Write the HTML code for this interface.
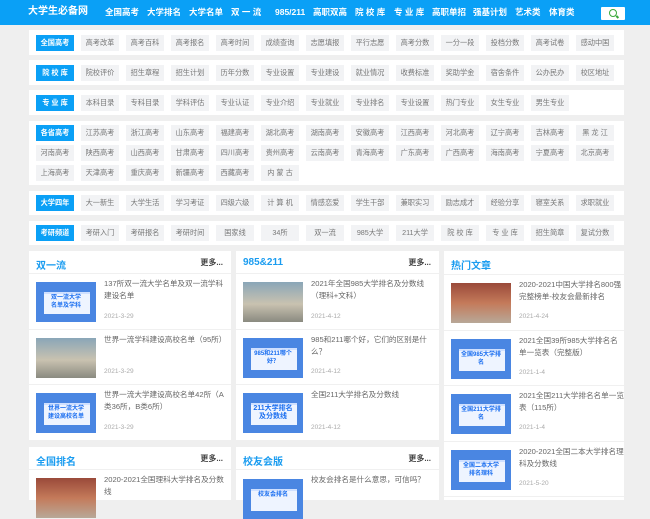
<!DOCTYPE html>
<html><head><meta charset="utf-8"><style>
*{margin:0;padding:0;box-sizing:border-box}
body{width:650px;height:500px;overflow:hidden;background:#efefef;font-family:"Liberation Sans","Noto Sans CJK SC",sans-serif;position:relative}
.hd{position:absolute;left:0;top:0;width:650px;height:25px;background:#0aa0f6}
.hd span{position:absolute;top:6px;color:#fff;font-weight:bold;font-size:8.5px;line-height:12px;white-space:nowrap}
.logo{font-size:10px!important}
.srch{position:absolute;left:601px;top:7px;width:24px;height:13px;background:#fff;border-radius:1px}
.srch:after{content:"";position:absolute;left:8px;top:2px;width:6px;height:6px;border:1.5px solid #3aa83a;border-radius:50%}
.srch:before{content:"";position:absolute;left:15px;top:9px;width:3px;height:1.5px;background:#3aa83a;transform:rotate(45deg)}
.row{position:absolute;left:29px;width:595px;background:#fff}
.it{position:absolute;width:38px;height:16px;background:#f2f3f5;color:#777;font-size:7.2px;line-height:16px;text-align:center;white-space:nowrap}
.lb{background:#0aa0f6;color:#fff;font-weight:bold}
.pn{position:absolute;background:#fff}
.pt{position:absolute;left:7px;top:6px;color:#1a9cf0;font-weight:bold;font-size:10px}
.more{position:absolute;right:8px;top:6px;color:#444;font-size:8px;font-weight:bold}
.ln{position:absolute;left:0;right:0;height:1px;background:#f0f0f0}
.im{position:absolute;width:60px;height:40px;background:#4a86e2;overflow:hidden}
.im i{position:absolute;left:8px;top:10px;width:46px;height:22px;background:#eef4ff;border-top:2px solid #cfe0ff}
.im b{position:absolute;left:10px;top:12px;width:40px;color:#1a6ef0;font-size:6px;line-height:8px;text-align:center;font-weight:bold}
.ph{background:linear-gradient(#8aa6b8,#c9c2b0 55%,#8a8a80)}
.ph2{background:linear-gradient(#9a4a3a,#c47a5a 50%,#b8a898)}
.tt{position:absolute;color:#666;font-size:7.6px;line-height:12px}
.dt{position:absolute;color:#aaa;font-size:6.5px}
</style></head><body>
<div class="hd">
<span class="logo" style="left:28px;top:6px">大学生必备网</span>
<span style="left:105px">全国高考</span><span style="left:147px">大学排名</span><span style="left:189px">大学名单</span><span style="left:231px">双 一 流</span><span style="left:275px">985/211</span><span style="left:313px">高职双高</span><span style="left:355px">院 校 库</span><span style="left:394px">专 业 库</span><span style="left:432px">高职单招</span><span style="left:473px">强基计划</span><span style="left:515px">艺术类</span><span style="left:549px">体育类</span>
<div class="srch"></div>
</div>

<div class="row" style="top:30px;height:25px">
<div class="it lb" style="left:7px;top:5px">全国高考</div><div class="it" style="left:52px;top:5px">高考改革</div><div class="it" style="left:97px;top:5px">高考百科</div><div class="it" style="left:142px;top:5px">高考报名</div><div class="it" style="left:187px;top:5px">高考时间</div><div class="it" style="left:232px;top:5px">成绩查询</div><div class="it" style="left:277px;top:5px">志愿填报</div><div class="it" style="left:322px;top:5px">平行志愿</div><div class="it" style="left:367px;top:5px">高考分数</div><div class="it" style="left:412px;top:5px">一分一段</div><div class="it" style="left:457px;top:5px">投档分数</div><div class="it" style="left:502px;top:5px">高考试卷</div><div class="it" style="left:547px;top:5px">感动中国</div>
</div>
<div class="row" style="top:60px;height:25px">
<div class="it lb" style="left:7px;top:5px">院 校 库</div><div class="it" style="left:52px;top:5px">院校评价</div><div class="it" style="left:97px;top:5px">招生章程</div><div class="it" style="left:142px;top:5px">招生计划</div><div class="it" style="left:187px;top:5px">历年分数</div><div class="it" style="left:232px;top:5px">专业设置</div><div class="it" style="left:277px;top:5px">专业建设</div><div class="it" style="left:322px;top:5px">就业情况</div><div class="it" style="left:367px;top:5px">收费标准</div><div class="it" style="left:412px;top:5px">奖助学金</div><div class="it" style="left:457px;top:5px">宿舍条件</div><div class="it" style="left:502px;top:5px">公办民办</div><div class="it" style="left:547px;top:5px">校区地址</div>
</div>
<div class="row" style="top:90px;height:25px">
<div class="it lb" style="left:7px;top:5px">专 业 库</div><div class="it" style="left:52px;top:5px">本科目录</div><div class="it" style="left:97px;top:5px">专科目录</div><div class="it" style="left:142px;top:5px">学科评估</div><div class="it" style="left:187px;top:5px">专业认证</div><div class="it" style="left:232px;top:5px">专业介绍</div><div class="it" style="left:277px;top:5px">专业就业</div><div class="it" style="left:322px;top:5px">专业排名</div><div class="it" style="left:367px;top:5px">专业设置</div><div class="it" style="left:412px;top:5px">热门专业</div><div class="it" style="left:457px;top:5px">女生专业</div><div class="it" style="left:502px;top:5px">男生专业</div>
</div>
<div class="row" style="top:121px;height:64px">
<div class="it lb" style="left:7px;top:4px">各省高考</div><div class="it" style="left:52px;top:4px">江苏高考</div><div class="it" style="left:97px;top:4px">浙江高考</div><div class="it" style="left:142px;top:4px">山东高考</div><div class="it" style="left:187px;top:4px">福建高考</div><div class="it" style="left:232px;top:4px">湖北高考</div><div class="it" style="left:277px;top:4px">湖南高考</div><div class="it" style="left:322px;top:4px">安徽高考</div><div class="it" style="left:367px;top:4px">江西高考</div><div class="it" style="left:412px;top:4px">河北高考</div><div class="it" style="left:457px;top:4px">辽宁高考</div><div class="it" style="left:502px;top:4px">吉林高考</div><div class="it" style="left:547px;top:4px">黑 龙 江</div>
<div class="it" style="left:7px;top:24px">河南高考</div><div class="it" style="left:52px;top:24px">陕西高考</div><div class="it" style="left:97px;top:24px">山西高考</div><div class="it" style="left:142px;top:24px">甘肃高考</div><div class="it" style="left:187px;top:24px">四川高考</div><div class="it" style="left:232px;top:24px">贵州高考</div><div class="it" style="left:277px;top:24px">云南高考</div><div class="it" style="left:322px;top:24px">青海高考</div><div class="it" style="left:367px;top:24px">广东高考</div><div class="it" style="left:412px;top:24px">广西高考</div><div class="it" style="left:457px;top:24px">海南高考</div><div class="it" style="left:502px;top:24px">宁夏高考</div><div class="it" style="left:547px;top:24px">北京高考</div>
<div class="it" style="left:7px;top:44px">上海高考</div><div class="it" style="left:52px;top:44px">天津高考</div><div class="it" style="left:97px;top:44px">重庆高考</div><div class="it" style="left:142px;top:44px">新疆高考</div><div class="it" style="left:187px;top:44px">西藏高考</div><div class="it" style="left:232px;top:44px">内 蒙 古</div>
</div>
<div class="row" style="top:191px;height:24px">
<div class="it lb" style="left:7px;top:4px">大学四年</div><div class="it" style="left:52px;top:4px">大一新生</div><div class="it" style="left:97px;top:4px">大学生活</div><div class="it" style="left:142px;top:4px">学习考证</div><div class="it" style="left:187px;top:4px">四级六级</div><div class="it" style="left:232px;top:4px">计 算 机</div><div class="it" style="left:277px;top:4px">情感恋爱</div><div class="it" style="left:322px;top:4px">学生干部</div><div class="it" style="left:367px;top:4px">兼职实习</div><div class="it" style="left:412px;top:4px">励志成才</div><div class="it" style="left:457px;top:4px">经验分享</div><div class="it" style="left:502px;top:4px">寝室关系</div><div class="it" style="left:547px;top:4px">求职就业</div>
</div>
<div class="row" style="top:221px;height:24px">
<div class="it lb" style="left:7px;top:4px">考研频道</div><div class="it" style="left:52px;top:4px">考研入门</div><div class="it" style="left:97px;top:4px">考研报名</div><div class="it" style="left:142px;top:4px">考研时间</div><div class="it" style="left:187px;top:4px">国家线</div><div class="it" style="left:232px;top:4px">34所</div><div class="it" style="left:277px;top:4px">双一流</div><div class="it" style="left:322px;top:4px">985大学</div><div class="it" style="left:367px;top:4px">211大学</div><div class="it" style="left:412px;top:4px">院 校 库</div><div class="it" style="left:457px;top:4px">专 业 库</div><div class="it" style="left:502px;top:4px">招生简章</div><div class="it" style="left:547px;top:4px">复试分数</div>
</div>

<!-- panel 1 -->
<div class="pn" style="left:29px;top:251px;width:202px;height:189px">
<div class="pt">双一流</div><div class="more">更多...</div>
<div class="ln" style="top:22px"></div><div class="ln" style="top:78px"></div><div class="ln" style="top:133px"></div>
<div class="im" style="left:7px;top:31px"><i></i><b>双一流大学<br>名单及学科</b></div>
<div class="tt" style="left:75px;top:27px;width:125px">137所双一流大学名单及双一流学科建设名单</div><div class="dt" style="left:75px;top:62px">2021-3-29</div>
<div class="im ph" style="left:7px;top:87px"></div>
<div class="tt" style="left:75px;top:83px;width:125px">世界一流学科建设高校名单（95所）</div><div class="dt" style="left:75px;top:117px">2021-3-29</div>
<div class="im" style="left:7px;top:142px"><i></i><b>世界一流大学<br>建设高校名单</b></div>
<div class="tt" style="left:75px;top:138px;width:125px">世界一流大学建设高校名单42所（A类36所，B类6所）</div><div class="dt" style="left:75px;top:173px">2021-3-29</div>
</div>
<!-- panel 2 -->
<div class="pn" style="left:236px;top:251px;width:203px;height:189px">
<div class="pt">985&amp;211</div><div class="more">更多...</div>
<div class="ln" style="top:22px"></div><div class="ln" style="top:78px"></div><div class="ln" style="top:133px"></div>
<div class="im ph" style="left:7px;top:31px"></div>
<div class="tt" style="left:75px;top:27px;width:125px">2021年全国985大学排名及分数线（理科+文科）</div><div class="dt" style="left:75px;top:62px">2021-4-12</div>
<div class="im" style="left:7px;top:87px"><i></i><b>985和211哪个好？</b></div>
<div class="tt" style="left:75px;top:83px;width:125px">985和211哪个好，它们的区别是什么？</div><div class="dt" style="left:75px;top:117px">2021-4-12</div>
<div class="im" style="left:7px;top:142px"><i></i><b style="font-size:7px">211大学排名<br>及分数线</b></div>
<div class="tt" style="left:75px;top:138px;width:125px">全国211大学排名及分数线</div><div class="dt" style="left:75px;top:173px">2021-4-12</div>
</div>
<!-- panel 3 -->
<div class="pn" style="left:444px;top:251px;width:180px;height:249px">
<div class="pt">热门文章</div>
<div class="ln" style="top:23px"></div><div class="ln" style="top:79px"></div><div class="ln" style="top:134px"></div><div class="ln" style="top:190px"></div><div class="ln" style="top:245px"></div>
<div class="im ph2" style="left:7px;top:32px"></div>
<div class="tt" style="left:75px;top:28px;width:105px">2020-2021中国大学排名800强完整榜单-校友会最新排名</div><div class="dt" style="left:75px;top:62px">2021-4-24</div>
<div class="im" style="left:7px;top:88px"><i></i><b>全国985大学排名</b></div>
<div class="tt" style="left:75px;top:84px;width:105px">2021全国39所985大学排名名单一览表（完整版）</div><div class="dt" style="left:75px;top:118px">2021-1-4</div>
<div class="im" style="left:7px;top:143px"><i></i><b>全国211大学排名</b></div>
<div class="tt" style="left:75px;top:139px;width:105px">2021全国211大学排名名单一览表（115所）</div><div class="dt" style="left:75px;top:173px">2021-1-4</div>
<div class="im" style="left:7px;top:199px"><i></i><b>全国二本大学排名理科</b></div>
<div class="tt" style="left:75px;top:195px;width:105px">2020-2021全国二本大学排名理科及分数线</div><div class="dt" style="left:75px;top:229px">2021-5-20</div>
</div>
<!-- panel 4 -->
<div class="pn" style="left:29px;top:447px;width:202px;height:53px">
<div class="pt">全国排名</div><div class="more">更多...</div>
<div class="ln" style="top:22px"></div>
<div class="im ph2" style="left:7px;top:31px"></div>
<div class="tt" style="left:75px;top:27px;width:127px">2020-2021全国理科大学排名及分数线</div>
</div>
<div class="pn" style="left:236px;top:447px;width:203px;height:53px">
<div class="pt">校友会版</div><div class="more">更多...</div>
<div class="ln" style="top:22px"></div>
<div class="im" style="left:7px;top:32px"><i></i><b>校友会排名</b></div>
<div class="tt" style="left:75px;top:27px;width:125px">校友会排名是什么意思，可信吗？</div>
</div>
</body></html>
